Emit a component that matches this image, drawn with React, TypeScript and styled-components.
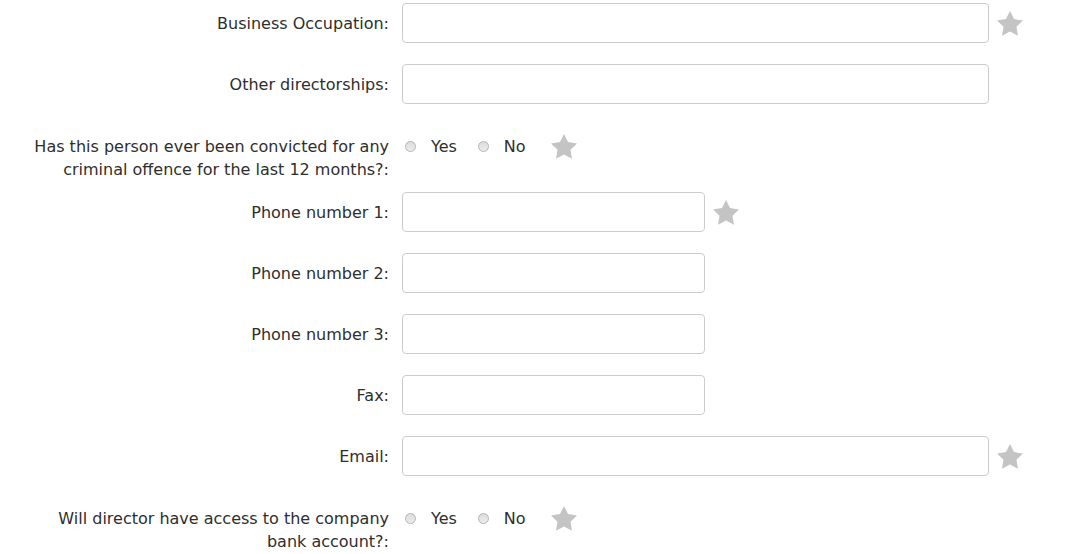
import React from "react";
import styled, { createGlobalStyle } from "styled-components";

const GlobalStyle = createGlobalStyle`
  body {
    margin: 0;
    background: #fff;
    font-family: "DejaVu Sans", "Liberation Sans", Arial, sans-serif;
    font-size: 16px;
    color: #2e2e2e;
  }
`;

// 폼 전체
const Form = styled.form`
  padding: 3px 0 0 29px;
`;

const Row = styled.div`
  display: flex;
  align-items: center;
  margin-bottom: 21px;
`;

// 라디오 질문 행 (두 줄 라벨)
const ChoiceRow = styled.div`
  display: flex;
  align-items: flex-start;
  padding-top: 10px;
  margin-bottom: 11px;
`;

const Label = styled.label`
  flex: 0 0 360px;
  margin-right: 13px;
  text-align: right;
  line-height: 23px;
`;

const Input = styled.input<{ $wide?: boolean }>`
  box-sizing: border-box;
  width: ${(p) => (p.$wide ? "587px" : "303px")};
  height: 40px;
  margin: 0;
  padding: 6px 12px;
  border: 1px solid #ccc;
  border-radius: 4px;
  background: #fff;
  font: inherit;
  outline: none;
`;

const Choices = styled.div`
  display: flex;
  align-items: center;
  height: 23px;
  padding-left: 3px;
`;

const Option = styled.label`
  display: flex;
  align-items: center;
  margin-right: 21px;
  line-height: 23px;
  cursor: pointer;
`;

const Dot = styled.span`
  box-sizing: border-box;
  width: 11px;
  height: 11px;
  margin-right: 15px;
  border: 1px solid #b4b4b4;
  border-radius: 50%;
  background: linear-gradient(#dcdcdc, #ececec);
`;

const StarIcon = styled.svg<{ $gap?: number }>`
  flex: none;
  margin-left: ${(p) => p.$gap ?? 8}px;
  fill: #c4c4c4;
`;

const Star = ({ gap }: { gap?: number }) => (
  <StarIcon $gap={gap} width="26" height="25" viewBox="2 2 20 19.3">
    <path d="M12 2l3.09 6.26L22 9.27l-5 4.87 1.18 6.88L12 17.77l-6.18 3.25L7 14.14 2 9.27l6.91-1.01L12 2z" />
  </StarIcon>
);

interface Field {
  label: string;
  wide?: boolean;
  required?: boolean;
  choice?: boolean;
}

const fields: Field[] = [
  { label: "Business Occupation:", wide: true, required: true },
  { label: "Other directorships:", wide: true },
  {
    label: "Has this person ever been convicted for any criminal offence for the last 12 months?:",
    choice: true,
    required: true,
  },
  { label: "Phone number 1:", required: true },
  { label: "Phone number 2:" },
  { label: "Phone number 3:" },
  { label: "Fax:" },
  { label: "Email:", wide: true, required: true },
  {
    label: "Will director have access to the company bank account?:",
    choice: true,
    required: true,
  },
];

export default function App() {
  return (
    <>
      <GlobalStyle />
      <Form>
        {fields.map((f, i) =>
          f.choice ? (
            <ChoiceRow key={i}>
              <Label>{f.label}</Label>
              <Choices>
                <Option>
                  <Dot />
                  Yes
                </Option>
                <Option>
                  <Dot />
                  No
                </Option>
                {f.required && <Star gap={4} />}
              </Choices>
            </ChoiceRow>
          ) : (
            <Row key={i}>
              <Label>{f.label}</Label>
              <Input type="text" $wide={f.wide} />
              {f.required && <Star />}
            </Row>
          )
        )}
      </Form>
    </>
  );
}
